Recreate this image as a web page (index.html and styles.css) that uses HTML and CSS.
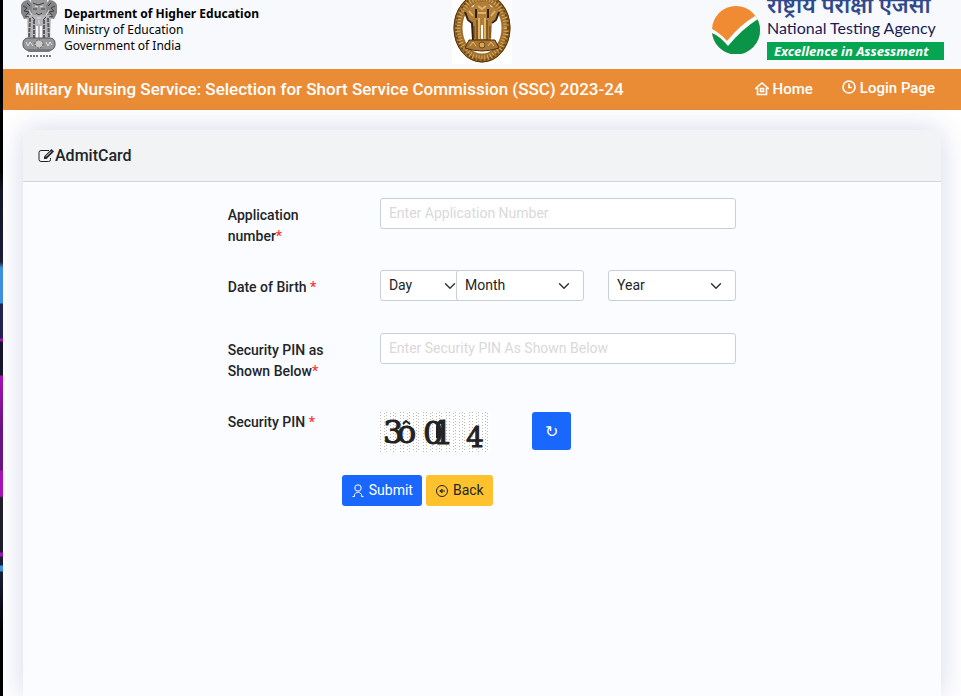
FILE: index.html
```html
<!DOCTYPE html>
<html lang="en">
<head>
    <meta charset="UTF-8">
    <meta name="viewport" content="width=device-width, initial-scale=1.0">
    <title>Admit Card</title>
    <link rel="stylesheet" href="styles.css">
</head>
<body>

    <header class="topbar">
        <div class="dept">
            <svg class="emblem" viewBox="0 0 38 60" aria-hidden="true">
                <path d="M11 0h16l2 9-4 7H13l-4-7z" fill="#9a9a9c"/>
                <path d="M1 5q2-5 8-5l3 5-1 13-7 1-3-6zM37 5q-2-5-8-5l-3 5 1 13 7 1 3-6z" fill="#858587"/>
                <path d="M7 15h24l-1 25H8z" fill="#b5b5b7"/>
                <path d="M10 18l-1 21M14 20v18M24 20v18M28 18l1 21" stroke="#5c5c60" stroke-width="2" stroke-dasharray="4 1"/>
                <path d="M16 26h2v12h-2zM20 26h2v12h-2z" fill="#f8f9fd"/>
                <path d="M3 6l4 2-3 3 5 1-3 3M35 6l-4 2 3 3-5 1 3 3M13 3l5 2 6-2M13 9h4M21 9h4M16 13l3 2 3-2M12 17l3 3M26 17l-3 3M7 3l3 3M31 3l-3 3M5 16l4 1M33 16l-4 1" fill="none" stroke="#3f3f43"/>
                <path d="M15 6l3 1M23 6l-3 1M9 10l2 4M29 10l-2 4M17 18h4M19 20v4" stroke="#e2e2e4"/>
                <rect x="3" y="38" width="32" height="12" rx="5" fill="#97979a" stroke="#58585c"/>
                <circle cx="19" cy="44" r="4" fill="#ccc" stroke="#555" stroke-dasharray="2 1"/>
                <path d="M6 42l2 4 2-4 3 4M26 42l2 4 2-4 2 3" fill="none" stroke="#e4e4e4"/>
                <path d="M6 50h26l-3 2H9z" fill="#77777b"/>
                <path d="M7 56h11M20 56h11" stroke="#77777b" stroke-width="2" stroke-dasharray="2 1"/>
            </svg>
            <p class="dept-name"><b>Department of Higher Education</b><br>Ministry of Education<br>Government of India</p>
        </div>

        <svg class="seal" viewBox="0 0 60 64" aria-hidden="true">
            <rect width="60" height="64" fill="#fff"/>
            <ellipse cx="30" cy="28" rx="24" ry="30" fill="#fff" stroke="#a06f2c" stroke-width="9"/>
            <ellipse cx="30" cy="28" rx="24" ry="30" fill="none" stroke="#d8ac62" stroke-width="5" stroke-dasharray="1 2"/>
            <ellipse cx="30" cy="28" rx="26" ry="32" fill="none" stroke="#6f4716" stroke-width="2" stroke-dasharray="2 2"/>
            <ellipse cx="30" cy="28" rx="28" ry="34" fill="none" stroke="#4c3110"/>
            <path d="M13 12q1-5 8-5l3-5h12l3 5q7 0 8 5l-3 7-4 3-1 18H21l-1-18-4-3z" fill="#b07e38"/>
            <path d="M13 12l3 8 4 3 1 17M24 9v9M36 9v9M47 12l-3 8-4 3" fill="none" stroke="#33200a" stroke-width="2"/>
            <path d="M25 20v20M35 20v20M22 26v12M38 26v12" stroke="#5a3a12"/>
            <path d="M27 18v21M33 18v21M17 11l4 5M43 11l-4 5M26 6l4 3 4-3M26 13h8" fill="none" stroke="#e0b468" stroke-width="2"/>
            <path d="M29 25h2v14h-2z" fill="#fff"/>
            <path d="M17 40h26l4 8q-17 6-34 0z" fill="#a97735" stroke="#452b0b"/>
            <path d="M18 46l3-4 3 4M36 46l3-4 3 4" fill="none" stroke="#e6be79"/>
            <circle cx="30" cy="45" r="3" fill="#d5a558" stroke="#6b4818"/>
        </svg>

        <div class="nta">
            <svg class="nta-mark" viewBox="0 0 48 48" aria-hidden="true">
                <circle cx="24" cy="24" r="24" fill="#f08b33"/>
                <path d="M0 25L15 38Q28 23 44 11Q48 17 48 24A24 24 0 0 1 0 25z" fill="#099447"/>
                <path d="M0 23q8 4 15 12Q28 19 43 10l3 3Q30 23 16 40Q8 30 0 27z" fill="#fff"/>
            </svg>
            <div class="nta-text">
                <span class="nta-hindi" lang="hi">राष्ट्रीय परीक्षा एजेंसी</span>
                <span class="nta-name">National Testing Agency</span>
                <span class="nta-motto">Excellence in Assessment</span>
            </div>
        </div>
    </header>

    <nav class="navbar">
        <h1 class="exam">Military Nursing Service: Selection for Short Service Commission (SSC) 2023-24</h1>
        <a class="nav-link home" href="#">
            <svg viewBox="0 0 14 14" aria-hidden="true"><path d="M0 7L7 1l7 6M2.500 6v6.500h9V6M5.500 6.500h3v3h-3z"/></svg>
            Home
        </a>
        <a class="nav-link login" href="#">
            <svg viewBox="0 0 14 14" aria-hidden="true"><circle cx="7" cy="7" r="6"/><path d="M7 3.500V7.500h3"/></svg>
            Login Page
        </a>
    </nav>

    <main class="card">
        <h2 class="card-header">
            <svg viewBox="0 0 17 16" aria-hidden="true">
                <path d="M11 2.500H3a2 2 0 0 0-2 2v7a2 2 0 0 0 2 2h7.500a2 2 0 0 0 2-2V10" fill="none" stroke="#212529"/>
                <path d="M6 8.500L13.500 1l2.500 2.500-7.500 7.500H6z" fill="#212529"/>
                <path d="M8 8.500l5-5" stroke="#f2f3f5"/>
            </svg>AdmitCard
        </h2>

        <form class="admit-form">
            <div class="row">
                <label for="appno">Application number<i>*</i></label>
                <div class="field"><input type="text" id="appno" placeholder="Enter Application Number"></div>
            </div>
            <div class="row dob">
                <label for="day">Date of Birth <i>*</i></label>
                <div class="dates">
                    <div class="field"><select id="day"><option>Day</option></select></div>
                    <div class="field"><select aria-label="Month"><option>Month</option></select></div>
                    <div class="field"><select aria-label="Year"><option>Year</option></select></div>
                </div>
            </div>
            <div class="row pin">
                <label for="pin">Security PIN as Shown Below<i>*</i></label>
                <div class="field"><input type="text" id="pin" placeholder="Enter Security PIN As Shown Below"></div>
            </div>
            <div class="row">
                <span class="label">Security PIN <i>*</i></span>
                <div class="field captcha-field">
                    <svg class="captcha" viewBox="0 0 110 40" role="img" aria-label="Security PIN">
                        <defs>
                            <pattern id="dots" width="23" height="3" patternUnits="userSpaceOnUse">
                                <path d="M0 0h1v1h-1zM4 1h1v1h-1zM6 0h1v1h-1zM10 1h1v1h-1zM13 0h1v1h-1zM15 1h1v1h-1zM20 0h1v1h-1z" fill="#bbb"/>
                            </pattern>
                        </defs>
                        <rect width="110" height="40" fill="#fff"/>
                        <rect width="110" height="40" fill="url(#dots)"/>
                        <g class="captcha-text">
                            <text x="3" y="31">3</text>
                            <text x="17" y="31">o</text>
                            <text x="43" y="32">0</text>
                            <text x="53" y="32">1</text>
                            <text class="small" x="86" y="35">4</text>
                        </g>
                        <path d="M23 12l3-3 4 3M48 13q5-6 9-1l4-4M57 14v12" fill="none" stroke="#222" stroke-width="2"/>
                    </svg>
                    <button type="button" class="btn refresh" aria-label="Refresh">↻</button>
                </div>
            </div>
            <div class="actions">
                <button type="submit" class="btn submit">
                    <svg viewBox="0 0 14 14" aria-hidden="true"><circle cx="7" cy="4" r="3.200"/><path d="M1.500 12.500h2V10.500q3.500-5 7 0v2h2"/></svg>
                    Submit
                </button>
                <button type="button" class="btn back">
                    <svg viewBox="0 0 14 14" aria-hidden="true"><circle cx="7" cy="7" r="5.500"/><path d="M10 7H4.500M7 5L5 7l2 2z"/></svg>
                    Back
                </button>
            </div>
        </form>
    </main>

</body>
</html>
```
FILE: styles.css
```css
* {
    margin: 0;
    padding: 0;
    box-sizing: border-box;
}

html {
    background: linear-gradient(#000 170px, #14142a 190px, #1b1b3a 262px, #3f8fe0 268px, #3f8fe0 303px, #222254 304px, #222254 338px, #a80fb8 339px, #a80fb8 341px, #17152b 342px, #17152b 375px, #a80fb8 376px, #6a1280 430px, #6a1280 470px, #a80fb8 471px, #a80fb8 496px, #1d1d2c 498px, #1d1d2c 552px, #a80fb8 553px, #a80fb8 556px, #1b1b3a 557px, #1b1b3a 565px, #3f8fe0 566px, #3f8fe0 571px, #1b1b3a 572px, #000 630px);
}

body {
    display: flex;
    flex-direction: column;
    height: 100vh;
    margin-left: 3px;
    overflow: hidden;
    background: #fff;
    color: #212529;
    font-family: Roboto, "Liberation Sans", sans-serif;
    font-size: 14px;
    line-height: 21px;
}

.topbar {
    display: flex;
    flex: none;
    justify-content: space-between;
    height: 69px;
    padding: 0 17px;
    background: #f8f9fd;
    overflow: hidden;
}

.dept,
.nta {
    display: flex;
    flex: 1;
}

.emblem {
    width: 38px;
    height: 60px;
    margin-right: 6px;
}

.dept-name {
    padding-top: 6px;
    color: #000;
    font-family: "Noto Sans", "Open Sans", sans-serif;
    font-size: 12px;
    line-height: 16px;
}

.seal {
    width: 60px;
    height: 64px;
}

.nta {
    justify-content: flex-end;
    gap: 7px;
}

.nta-mark {
    width: 48px;
    height: 48px;
    margin-top: 6px;
}

.nta-text {
    display: flex;
    flex-direction: column;
    width: 177px;
    white-space: nowrap;
}

.nta-hindi {
    height: 14px;
    color: #2f4a8c;
    font-family: "Noto Sans Devanagari", "Noto Sans", sans-serif;
    font-size: 22px;
    font-weight: 600;
    line-height: 16px;
}

.nta-name {
    height: 28px;
    color: #1b1b52;
    font-family: Lato, sans-serif;
    font-size: 16px;
    line-height: 28px;
}

.nta-motto {
    padding-left: 7px;
    background: #05a552;
    color: #fff;
    font-family: "Noto Sans", sans-serif;
    font-size: 13px;
    font-style: italic;
    font-weight: 700;
    line-height: 18px;
}

.navbar {
    display: flex;
    flex: none;
    align-items: center;
    height: 41px;
    padding: 0 26px 0 12px;
    background: #ea8c35;
    color: #fff;
}

.exam {
    flex: 1;
    font-size: 17px;
    font-weight: 500;
}

.nav-link {
    display: flex;
    align-items: center;
    gap: 4px;
    color: #fff;
    font-size: 15px;
    font-weight: 500;
    text-decoration: none;
}

.nav-link svg {
    width: 14px;
    height: 14px;
    margin-bottom: 2px;
    fill: none;
    stroke: currentColor;
    stroke-width: 1.6;
}

.login {
    margin-left: 29px;
    padding-bottom: 3px;
}

.card {
    flex: 1;
    margin: 20px 20px 0;
    border-radius: 6px 6px 0 0;
    background: #fbfcff;
    box-shadow: 0 0 28px rgba(40, 60, 150, 0.2);
}

.card-header {
    display: flex;
    align-items: center;
    height: 52px;
    padding: 0 15px;
    border-bottom: 1px solid #d2d5d9;
    border-radius: 6px 6px 0 0;
    background: #f2f3f5;
    font-size: 16px;
    font-weight: 500;
}

.card-header svg {
    width: 17px;
    height: 16px;
}

.admit-form {
    width: 58%;
    margin-left: 21%;
    padding-top: 16px;
}

.row {
    display: grid;
    grid-template-columns: 2fr 5fr;
    margin-bottom: 23px;
}

.row.dob {
    margin-bottom: 32px;
}

.row.pin {
    margin-bottom: 30px;
}

.row label,
.label {
    padding: 7px 12px 0;
    font-weight: 500;
}

.row i {
    color: #f33;
    font-style: normal;
}

.field {
    min-width: 0;
    padding: 0 12px;
}

input,
select {
    width: 100%;
    height: 31px;
    padding: 4px 8px;
    border: 1px solid #c9cfd9;
    border-radius: 3px;
    background: #fff;
    color: #212529;
    font: inherit;
    vertical-align: top;
}

input {
    padding-bottom: 5px;
}

input::placeholder {
    color: #d9d9d9;
}

select {
    appearance: none;
    background: #fff url("data:image/svg+xml,%3Csvg xmlns='http://www.w3.org/2000/svg' viewBox='0 0 16 16'%3E%3Cpath d='M2 5l6 6 6-6' fill='none' stroke='%23343a40' stroke-width='2' stroke-linecap='round' stroke-linejoin='round'/%3E%3C/svg%3E") no-repeat right 13px center / 12px;
}

.dates {
    display: grid;
    grid-template-columns: 1fr 2fr 2fr;
}

/* wider than its column, the month box lies over the end of it */
#day {
    width: 90px;
}

.row .label {
    padding-top: 0;
}

.captcha-field {
    display: flex;
    align-items: flex-start;
    gap: 42px;
}

.captcha {
    width: 110px;
    height: 40px;
}

.captcha-text {
    fill: #222;
    stroke: #222;
    stroke-width: 1;
    font-family: "DejaVu Serif", serif;
    font-size: 32px;
}

.captcha-text .small {
    font-size: 28px;
}

.btn {
    height: 31px;
    padding: 0 8px;
    border: 1px solid transparent;
    border-radius: 3px;
    font: inherit;
    cursor: pointer;
}

.refresh {
    width: 39px;
    height: 38px;
    background: #1a67fd;
    color: #fff;
    font-size: 16px;
}

.actions {
    display: flex;
    gap: 4px;
    margin-left: 126px;
}

.submit,
.back {
    display: flex;
    align-items: center;
    gap: 4px;
}

.submit {
    background: #1a67fd;
    color: #fff;
}

.back {
    background: #ffc22e;
    color: #212529;
}

.actions svg {
    width: 14px;
    height: 14px;
    fill: none;
    stroke: currentColor;
}
```
